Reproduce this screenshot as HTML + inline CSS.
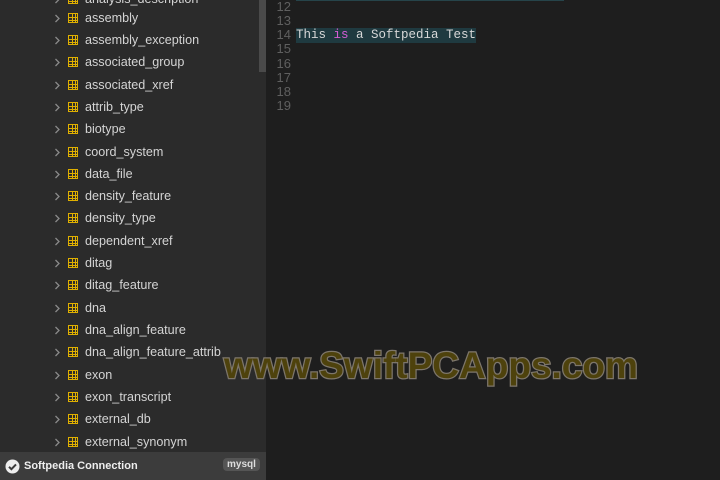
<!DOCTYPE html>
<html><head><meta charset="utf-8">
<style>
*{margin:0;padding:0;box-sizing:border-box}
body{width:720px;height:480px;overflow:hidden;background:#1e1e1e;font-family:"Liberation Sans",sans-serif;position:relative}
#side{position:absolute;left:0;top:0;width:266px;height:480px;background:#2b2b2b}
.row{position:absolute;left:0;height:22px;width:258px;color:#d4d4d4;font-size:12.6px;line-height:22px}
.row svg.ch{position:absolute;left:54px;top:7px}
.row .ic{position:absolute;left:68px;top:6px;width:10px;height:10px;border:1px solid #e0b000;
background:linear-gradient(#e0b000,#e0b000) 0 3px/100% 1px no-repeat,linear-gradient(#e0b000,#e0b000) 0 6px/100% 1px no-repeat,linear-gradient(90deg,#e0b000,#e0b000) 3px 0/1px 100% no-repeat,linear-gradient(90deg,#e0b000,#e0b000) 6px 0/1px 100% no-repeat}
.row .t{position:absolute;left:85px;top:0}
#sb{position:absolute;left:259px;top:0;width:7px;height:72px;background:#4a4a4a}
#foot{position:absolute;left:0;top:452px;width:266px;height:28px;background:#3c3c3c}
#foot .n{position:absolute;left:24px;top:8px;font-size:11px;font-weight:bold;color:#eee}
#foot .m{position:absolute;left:223px;top:6px;font-size:10px;font-weight:bold;color:#ddd;background:#555;border-radius:4px;padding:1px 4px}
#ed{position:absolute;left:266px;top:0;width:454px;height:480px;background:#1e1e1e}
.ln{position:absolute;left:2px;width:23px;text-align:right;color:#5f5f5f;font-family:"Liberation Sans",sans-serif;font-size:13px;line-height:14px}
#code{position:absolute;left:30px;top:28px;height:15px;background:#1f3a40;font-family:"Liberation Mono",monospace;font-size:12.5px;line-height:15px;color:#d8d8d8}
#topl{position:absolute;left:30px;top:0;width:268px;height:1px;background:#26444a}
#wm{position:absolute;left:224px;top:345px;font-size:37px;font-weight:bold;color:#4e420c;-webkit-text-stroke:2.5px #7d766b;paint-order:stroke fill;white-space:nowrap}
</style></head><body>
<div id="side">
<div class="row" style="top:-12px"><svg class="ch" width="7" height="9" viewBox="0 0 7 9"><path d="M1.5 1l3.5 3.5-3.5 3.5" stroke="#8a8a8a" stroke-width="1.3" fill="none"/></svg><span class="ic"></span><span class="t">analysis_description</span></div>
<div class="row" style="top:7px"><svg class="ch" width="7" height="9" viewBox="0 0 7 9"><path d="M1.5 1l3.5 3.5-3.5 3.5" stroke="#8a8a8a" stroke-width="1.3" fill="none"/></svg><span class="ic"></span><span class="t">assembly</span></div>
<div class="row" style="top:29px"><svg class="ch" width="7" height="9" viewBox="0 0 7 9"><path d="M1.5 1l3.5 3.5-3.5 3.5" stroke="#8a8a8a" stroke-width="1.3" fill="none"/></svg><span class="ic"></span><span class="t">assembly_exception</span></div>
<div class="row" style="top:51px"><svg class="ch" width="7" height="9" viewBox="0 0 7 9"><path d="M1.5 1l3.5 3.5-3.5 3.5" stroke="#8a8a8a" stroke-width="1.3" fill="none"/></svg><span class="ic"></span><span class="t">associated_group</span></div>
<div class="row" style="top:74px"><svg class="ch" width="7" height="9" viewBox="0 0 7 9"><path d="M1.5 1l3.5 3.5-3.5 3.5" stroke="#8a8a8a" stroke-width="1.3" fill="none"/></svg><span class="ic"></span><span class="t">associated_xref</span></div>
<div class="row" style="top:96px"><svg class="ch" width="7" height="9" viewBox="0 0 7 9"><path d="M1.5 1l3.5 3.5-3.5 3.5" stroke="#8a8a8a" stroke-width="1.3" fill="none"/></svg><span class="ic"></span><span class="t">attrib_type</span></div>
<div class="row" style="top:118px"><svg class="ch" width="7" height="9" viewBox="0 0 7 9"><path d="M1.5 1l3.5 3.5-3.5 3.5" stroke="#8a8a8a" stroke-width="1.3" fill="none"/></svg><span class="ic"></span><span class="t">biotype</span></div>
<div class="row" style="top:141px"><svg class="ch" width="7" height="9" viewBox="0 0 7 9"><path d="M1.5 1l3.5 3.5-3.5 3.5" stroke="#8a8a8a" stroke-width="1.3" fill="none"/></svg><span class="ic"></span><span class="t">coord_system</span></div>
<div class="row" style="top:163px"><svg class="ch" width="7" height="9" viewBox="0 0 7 9"><path d="M1.5 1l3.5 3.5-3.5 3.5" stroke="#8a8a8a" stroke-width="1.3" fill="none"/></svg><span class="ic"></span><span class="t">data_file</span></div>
<div class="row" style="top:185px"><svg class="ch" width="7" height="9" viewBox="0 0 7 9"><path d="M1.5 1l3.5 3.5-3.5 3.5" stroke="#8a8a8a" stroke-width="1.3" fill="none"/></svg><span class="ic"></span><span class="t">density_feature</span></div>
<div class="row" style="top:207px"><svg class="ch" width="7" height="9" viewBox="0 0 7 9"><path d="M1.5 1l3.5 3.5-3.5 3.5" stroke="#8a8a8a" stroke-width="1.3" fill="none"/></svg><span class="ic"></span><span class="t">density_type</span></div>
<div class="row" style="top:230px"><svg class="ch" width="7" height="9" viewBox="0 0 7 9"><path d="M1.5 1l3.5 3.5-3.5 3.5" stroke="#8a8a8a" stroke-width="1.3" fill="none"/></svg><span class="ic"></span><span class="t">dependent_xref</span></div>
<div class="row" style="top:252px"><svg class="ch" width="7" height="9" viewBox="0 0 7 9"><path d="M1.5 1l3.5 3.5-3.5 3.5" stroke="#8a8a8a" stroke-width="1.3" fill="none"/></svg><span class="ic"></span><span class="t">ditag</span></div>
<div class="row" style="top:274px"><svg class="ch" width="7" height="9" viewBox="0 0 7 9"><path d="M1.5 1l3.5 3.5-3.5 3.5" stroke="#8a8a8a" stroke-width="1.3" fill="none"/></svg><span class="ic"></span><span class="t">ditag_feature</span></div>
<div class="row" style="top:297px"><svg class="ch" width="7" height="9" viewBox="0 0 7 9"><path d="M1.5 1l3.5 3.5-3.5 3.5" stroke="#8a8a8a" stroke-width="1.3" fill="none"/></svg><span class="ic"></span><span class="t">dna</span></div>
<div class="row" style="top:319px"><svg class="ch" width="7" height="9" viewBox="0 0 7 9"><path d="M1.5 1l3.5 3.5-3.5 3.5" stroke="#8a8a8a" stroke-width="1.3" fill="none"/></svg><span class="ic"></span><span class="t">dna_align_feature</span></div>
<div class="row" style="top:341px"><svg class="ch" width="7" height="9" viewBox="0 0 7 9"><path d="M1.5 1l3.5 3.5-3.5 3.5" stroke="#8a8a8a" stroke-width="1.3" fill="none"/></svg><span class="ic"></span><span class="t">dna_align_feature_attrib</span></div>
<div class="row" style="top:364px"><svg class="ch" width="7" height="9" viewBox="0 0 7 9"><path d="M1.5 1l3.5 3.5-3.5 3.5" stroke="#8a8a8a" stroke-width="1.3" fill="none"/></svg><span class="ic"></span><span class="t">exon</span></div>
<div class="row" style="top:386px"><svg class="ch" width="7" height="9" viewBox="0 0 7 9"><path d="M1.5 1l3.5 3.5-3.5 3.5" stroke="#8a8a8a" stroke-width="1.3" fill="none"/></svg><span class="ic"></span><span class="t">exon_transcript</span></div>
<div class="row" style="top:408px"><svg class="ch" width="7" height="9" viewBox="0 0 7 9"><path d="M1.5 1l3.5 3.5-3.5 3.5" stroke="#8a8a8a" stroke-width="1.3" fill="none"/></svg><span class="ic"></span><span class="t">external_db</span></div>
<div class="row" style="top:431px"><svg class="ch" width="7" height="9" viewBox="0 0 7 9"><path d="M1.5 1l3.5 3.5-3.5 3.5" stroke="#8a8a8a" stroke-width="1.3" fill="none"/></svg><span class="ic"></span><span class="t">external_synonym</span></div>
<div id="sb"></div>
<div id="foot"><svg style="position:absolute;left:5px;top:7px" width="15" height="15" viewBox="0 0 15 15"><circle cx="7.5" cy="7.5" r="7" fill="#eee"/><path d="M4 7.8l2.4 2.4 4.6-4.8" stroke="#3c3c3c" stroke-width="2" fill="none"/></svg><span class="n">Softpedia Connection</span><span class="m">mysql</span></div>
</div>
<div id="ed">
<div id="topl"></div>
<div class="ln" style="top:0">12</div>
<div class="ln" style="top:14px">13</div>
<div class="ln" style="top:28px">14</div>
<div class="ln" style="top:42px">15</div>
<div class="ln" style="top:57px">16</div>
<div class="ln" style="top:71px">17</div>
<div class="ln" style="top:85px">18</div>
<div class="ln" style="top:99px">19</div>
<div id="code">This <span style="color:#d65cd6">is</span> a Softpedia Test</div>
</div>
<div id="wm">www.SwiftPCApps.com</div>
</body></html>
